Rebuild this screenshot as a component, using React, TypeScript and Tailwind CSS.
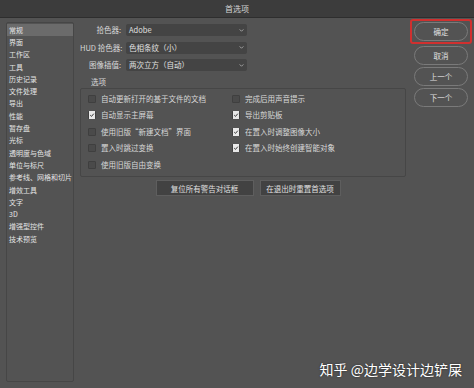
import React from "react";

const sideItems = [
    "常规", "界面", "工作区", "工具", "历史记录", "文件处理", "导出", "性能", "暂存盘", "光标",
    "透明度与色域", "单位与标尺", "参考线、网格和切片", "增效工具", "文字", "3D", "增强型控件", "技术预览",
];

const leftOpts = [
    { label: "自动更新打开的基于文件的文档", on: false },
    { label: "自动显示主屏幕", on: true },
    { label: "使用旧版“新建文档”界面", on: false },
    { label: "置入时跳过变换", on: false },
    { label: "使用旧版自由变换", on: false },
];

const rightOpts = [
    { label: "完成后用声音提示", on: false },
    { label: "导出剪贴板", on: true },
    { label: "在置入时调整图像大小", on: true },
    { label: "在置入时始终创建智能对象", on: true },
];

const font = { fontFamily: '"Noto Sans CJK SC", "Liberation Sans", sans-serif' };

function Check({ on, label }: { on: boolean; label: string }) {
    return (
        <div className="flex h-[16.5px] items-center gap-[5px]">
            <div className="flex h-[8px] w-[8px] items-center justify-center rounded-[1px] border border-[#3f3f3f] bg-[#4a4a4a]">
                {on && (
                    <svg viewBox="0 0 10 10" className="h-[8px] w-[8px] bg-[#e8e8e8]">
                        <path d="M2 5.2 L4.2 7.3 L8 2.8" stroke="#333" strokeWidth="1.6" fill="none" />
                    </svg>
                )}
            </div>
            <span className="whitespace-nowrap text-[7.5px] text-[#d8d8d8]">{label}</span>
        </div>
    );
}

function Select({ value }: { value: string }) {
    return (
        <div className="flex h-[12px] w-[121px] items-center justify-between rounded-[2px] bg-[#444444] pl-[3px] pr-[3px]">
            <span className="text-[7.5px] text-[#e0e0e0]">{value}</span>
            <svg viewBox="0 0 6 4" className="h-[3px] w-[5px]">
                <path d="M0.5 0.5 L3 3 L5.5 0.5" stroke="#bbb" strokeWidth="1" fill="none" />
            </svg>
        </div>
    );
}

function PillButton({ label }: { label: string }) {
    return (
        <div className="flex h-[19px] w-[54px] items-center justify-center rounded-full border border-[#7a7a7a] text-[7.5px] text-[#e0e0e0]">
            {label}
        </div>
    );
}

export default function App() {
    return (
        <div className="flex h-[388px] w-[474px] flex-col overflow-hidden bg-[#535353]" style={font}>
            {/* title bar */}
            <div className="flex h-[18px] shrink-0 items-center justify-center border-b border-[#2e2e2e] bg-[#3c3c3c] text-[8px] text-[#d4d4d4]">
                首选项
            </div>

            <div className="relative flex flex-1 pl-[6px] pt-[4px]">
                {/* sidebar */}
                <div className="mb-[6px] flex w-[68px] flex-col rounded-[2px] border border-[#464646] pt-[1px]">
                    {sideItems.map((s, i) => (
                        <div
                            key={s}
                            className={
                                "flex h-[12.3px] items-center whitespace-nowrap pl-[2px] text-[7px] leading-none text-[#e4e4e4] " +
                                (i === 0 ? "bg-[#6b6b6b]" : "")
                            }
                        >
                            {s}
                        </div>
                    ))}
                </div>

                {/* main */}
                <div className="flex w-[332px] flex-col pl-[6px]">
                    <div className="flex flex-col gap-[5.5px] pt-[2px]">
                        <div className="flex items-center">
                            <span className="w-[41px] text-right text-[7.5px] text-[#d8d8d8]">拾色器:</span>
                            <div className="ml-[5px]"><Select value="Adobe" /></div>
                        </div>
                        <div className="flex items-center">
                            <span className="w-[41px] whitespace-nowrap text-right text-[7.5px] text-[#d8d8d8]">HUD 拾色器:</span>
                            <div className="ml-[5px]"><Select value="色相条纹（小）" /></div>
                        </div>
                        <div className="flex items-center">
                            <span className="w-[41px] text-right text-[7.5px] text-[#d8d8d8]">图像插值:</span>
                            <div className="ml-[5px]"><Select value="两次立方（自动）" /></div>
                        </div>
                    </div>

                    <div className="mt-[5px] pl-[11px] text-[7.5px] text-[#d8d8d8]">选项</div>
                    <div className="mt-[1px] flex h-[89px] rounded-[2px] border border-[#464646] pl-[7px] pt-[1px]">
                        <div className="flex w-[144px] flex-col">
                            {leftOpts.map((o) => (
                                <Check key={o.label} {...o} />
                            ))}
                        </div>
                        <div className="flex flex-col">
                            {rightOpts.map((o) => (
                                <Check key={o.label} {...o} />
                            ))}
                        </div>
                    </div>

                    <div className="mt-[3px] flex justify-center gap-[6px] pl-[10px]">
                        <div className="flex h-[16px] w-[98px] items-center justify-center border border-[#5e5e5e] bg-[#424242] text-[7.5px] text-[#e0e0e0]">
                            复位所有警告对话框
                        </div>
                        <div className="flex h-[16px] w-[81px] items-center justify-center border border-[#5e5e5e] bg-[#424242] text-[7.5px] text-[#e0e0e0]">
                            在退出时重置首选项
                        </div>
                    </div>
                </div>

                {/* right buttons */}
                <div className="ml-[8px] flex flex-col gap-[2px] pt-[0px]">
                    <div className="-ml-[4px] -mt-[3px] rounded-[3px] border-2 border-[#d0302f] px-[2px] py-[1px]">
                        <PillButton label="确定" />
                    </div>
                    <PillButton label="取消" />
                    <PillButton label="上一个" />
                    <PillButton label="下一个" />
                </div>

                {/* watermark */}
                <div className="absolute bottom-[8px] right-[12px] text-[14px] text-white [text-shadow:0_0_2px_rgba(0,0,0,0.6)]">
                    知乎 @边学设计边铲屎
                </div>
            </div>
        </div>
    );
}
